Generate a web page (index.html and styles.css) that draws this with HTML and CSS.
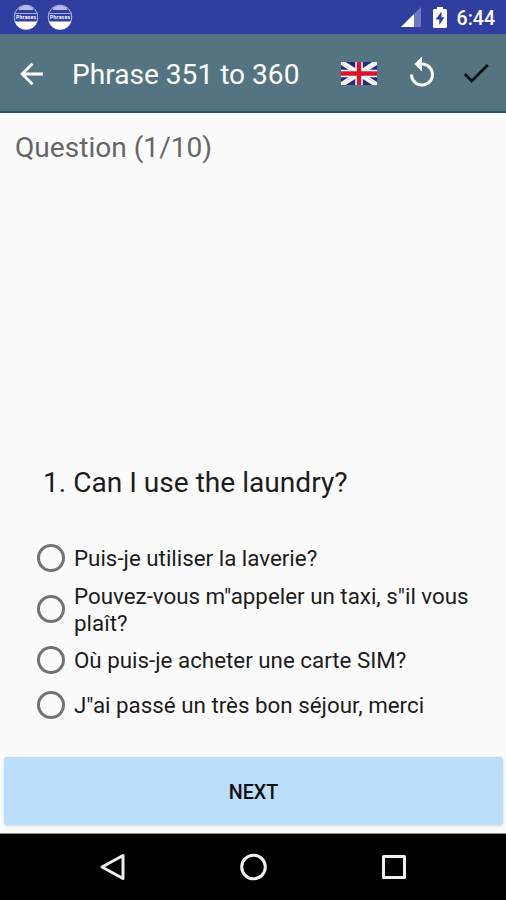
FILE: index.html
```html
<!DOCTYPE html>
<html lang="en">
<head>
    <meta charset="UTF-8">
    <meta name="viewport" content="width=device-width, initial-scale=1.0">
    <title>Phrase 351 to 360</title>
    <link rel="stylesheet" href="styles.css">
</head>
<body>

    <div class="status-bar">
        <svg class="notif" viewBox="0 0 26 26">
            <circle cx="13" cy="13" r="11.8" fill="none" stroke="#b4bbe4" stroke-width="1"/>
            <path d="M7 3.2A12 12 0 0 1 19 3.2L20.5 6H5.5Z" fill="#b4bbe4"/>
            <path d="M1.7 9.5H24.3" stroke="#a5ade0" stroke-width="1"/>
            <text x="13" y="14.7" text-anchor="middle" textLength="20">Phrases</text>
            <path d="M1.6 17.5H24.4A12 12 0 0 1 1.6 17.5Z" fill="#fff"/>
        </svg>
        <svg class="notif" viewBox="0 0 26 26">
            <circle cx="13" cy="13" r="11.8" fill="none" stroke="#b4bbe4" stroke-width="1"/>
            <path d="M7 3.2A12 12 0 0 1 19 3.2L20.5 6H5.5Z" fill="#b4bbe4"/>
            <path d="M1.7 9.5H24.3" stroke="#a5ade0" stroke-width="1"/>
            <text x="13" y="14.7" text-anchor="middle" textLength="20">Phrases</text>
            <path d="M1.6 17.5H24.4A12 12 0 0 1 1.6 17.5Z" fill="#fff"/>
        </svg>
        <div class="status-right">
            <svg class="signal" viewBox="0 0 20 20">
                <path d="M0 20L20 0V20Z" fill="#7079be"/>
                <path d="M0 20L13 7V20Z" fill="#fff"/>
            </svg>
            <svg class="battery" viewBox="0 0 14 21">
                <path d="M4 0H10V2H12.5Q14 2 14 3.5V19.5Q14 21 12.5 21H1.5Q0 21 0 19.5V3.5Q0 2 1.5 2H4Z" fill="#fff"/>
                <path d="M8.5 4.5L2.5 12.5H6.3V18L11.5 10.3H8.5Z" fill="#303f9f"/>
            </svg>
            <span class="clock">6:44</span>
        </div>
    </div>

    <div class="app-bar">
        <svg class="back" viewBox="0 0 24 24"><path d="M20 11H7.83l5.59-5.59L12 4l-8 8 8 8 1.41-1.41L7.83 13H20z" fill="#fff"/></svg>
        <h1>Phrase 351 to 360</h1>
        <svg class="flag" viewBox="0 0 36 23">
            <rect width="36" height="23" fill="#1c2c86"/>
            <path d="M0 0L36 23M36 0L0 23" stroke="#fff" stroke-width="5"/>
            <path d="M0 1L12 8.5M24 14.5L36 22M36 1L24 8.5M12 14.5L0 22" stroke="#f0c4cc" stroke-width="0.8"/>
            <path d="M18 0V23M0 11.5H36" stroke="#fff" stroke-width="7.5"/>
            <path d="M18 0V23M0 11.5H36" stroke="#d8142c" stroke-width="4.5"/>
        </svg>
        <svg class="replay" viewBox="0 0 24 24"><path d="M12 5V1L7 6l5 5V7c3.31 0 6 2.69 6 6s-2.69 6-6 6-6-2.69-6-6H4c0 4.42 3.58 8 8 8s8-3.58 8-8-3.58-8-8-8z" fill="#fff"/></svg>
        <svg class="check" viewBox="0 0 24 24"><path d="M9 16.17L4.83 12l-1.42 1.41L9 19 21 7l-1.41-1.41z" fill="#0b0f11"/></svg>
    </div>

    <div class="content">
        <div class="counter">Question (1/10)</div>

        <div class="question">
            <h2>1. Can I use the laundry?</h2>
            <label class="option"><input type="radio" name="answer"><span>Puis-je utiliser la laverie?</span></label>
            <label class="option"><input type="radio" name="answer"><span>Pouvez-vous m"appeler un taxi, s"il vous plaît?</span></label>
            <label class="option"><input type="radio" name="answer"><span>Où puis-je acheter une carte SIM?</span></label>
            <label class="option"><input type="radio" name="answer"><span>J"ai passé un très bon séjour, merci</span></label>
        </div>

        <button class="next-btn">NEXT</button>
    </div>

    <div class="nav-bar">
        <svg viewBox="0 0 30 30"><path d="M25 3.5V26.5L4 15Z" fill="none" stroke="#eee" stroke-width="3" stroke-linejoin="round"/></svg>
        <svg viewBox="0 0 30 30"><circle cx="15.5" cy="15" r="11.8" fill="none" stroke="#eee" stroke-width="3"/></svg>
        <svg viewBox="0 0 30 30"><rect x="4.5" y="4.5" width="21" height="21" fill="none" stroke="#eee" stroke-width="3" stroke-linejoin="round"/></svg>
    </div>

</body>
</html>
```
FILE: styles.css
```css
* {
    box-sizing: border-box;
}
body {
    margin: 0;
    height: 900px;
    display: flex;
    flex-direction: column;
    overflow: hidden;
    font-family: Roboto, "Liberation Sans", sans-serif;
    background-color: #fbfbfb;
    color: #1c1c1c;
}
svg {
    display: block;
    flex: none;
}

/* status bar */
.status-bar {
    height: 34px;
    flex: none;
    display: flex;
    align-items: center;
    gap: 8px;
    padding: 0 11px 0 13px;
    background-color: #303f9f;
}
.notif {
    width: 26px;
    height: 26px;
}
.notif text {
    font-size: 5px;
    font-weight: bold;
    fill: #fff;
}
.status-right {
    display: flex;
    align-items: center;
    margin-left: auto;
}
.signal {
    width: 20px;
    height: 20px;
    margin-right: 12px;
}
.battery {
    width: 14px;
    height: 21px;
    margin-right: 10px;
}
.clock {
    color: #ffffff;
    font-size: 19.5px;
    font-weight: 500;
    line-height: 32px;
    padding-top: 3px;
}

/* toolbar */
.app-bar {
    height: 79px;
    flex: none;
    display: flex;
    align-items: center;
    padding: 2px 13px 0 14px;
    background-color: #557482;
    border-bottom: 2px solid #255766;
}
.app-bar h1 {
    margin: 0 auto 0 23px;
    color: #ffffff;
    font-size: 28.1px;
    font-weight: 400;
    line-height: 36px;
    padding-top: 2px;
}
.back {
    width: 35px;
    height: 34px;
}
.flag {
    width: 36px;
    height: 23px;
    margin-right: 27px;
}
.replay {
    width: 36px;
    height: 36px;
    margin: 0 19px 2px 0;
}
.check {
    width: 34px;
    height: 34px;
    margin-bottom: 2px;
}

/* question */
.content {
    flex: 1;
    display: flex;
    flex-direction: column;
    padding: 17px 3px 8px 4px;
    border-bottom: 1px solid #8a8a8a;
}
.counter {
    padding-left: 11px;
    font-size: 28.1px;
    line-height: 36px;
    color: #666666;
}
.question {
    margin-top: auto;
    padding: 0 30px 0 33px;
}
.question h2 {
    margin: 0 0 35px 6px;
    font-size: 28.1px;
    font-weight: 400;
    line-height: 36px;
}
.option {
    display: flex;
    align-items: center;
    min-height: 45px;
    font-size: 22.35px;
    line-height: 27px;
}
.option:nth-of-type(2) {
    min-height: 57px;
}
.option input {
    appearance: none;
    flex: none;
    width: 28px;
    height: 28px;
    margin: 0 9px 2px 0;
    border: 3px solid #737373;
    border-radius: 50%;
}
.next-btn {
    height: 68px;
    margin-top: 29px;
    padding-top: 3px;
    border: none;
    border-radius: 3px;
    background-color: #bbdefb;
    color: #111111;
    font-family: inherit;
    font-size: 19.7px;
    font-weight: 500;
    box-shadow: 0 1px 3px rgba(0, 0, 0, 0.15);
}

/* navigation */
.nav-bar {
    height: 66px;
    flex: none;
    display: flex;
    align-items: center;
    justify-content: center;
    gap: 110.5px;
    background-color: #000000;
}
.nav-bar svg {
    width: 30px;
    height: 30px;
}
```
